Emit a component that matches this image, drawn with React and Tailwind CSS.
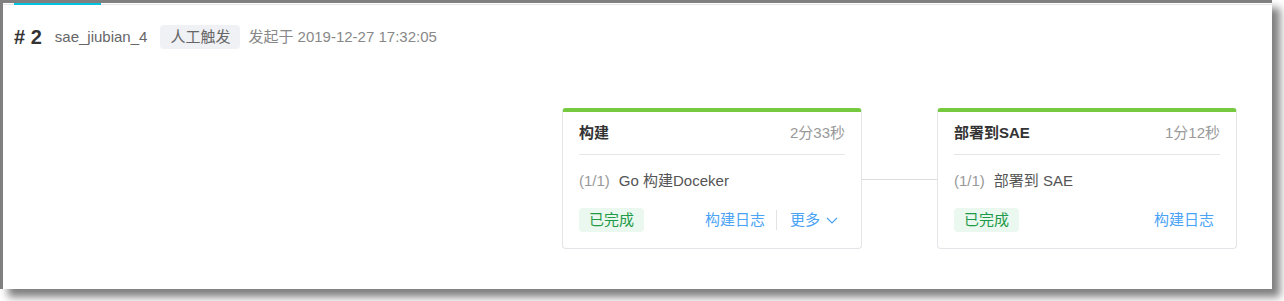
import React from "react";

const font = { fontFamily: '"Liberation Sans", "Noto Sans CJK SC", Arial, sans-serif' };

function Chevron() {
  return (
    <svg width="14" height="14" viewBox="0 0 14 14" className="ml-[5px]" fill="none">
      <path d="M2 5 L7 10 L12 5" stroke="#4aa3f5" strokeWidth="1.2" />
    </svg>
  );
}

function Card({ title, duration, task, more }) {
  return (
    <div className="w-[300px] bg-white border border-[#e3e5e8] border-t-[4px] border-t-[#77c940] rounded-[4px] px-[16px]">
      <div className="h-[43px] flex items-center justify-between border-b border-[#e6e6e6]">
        <span className="text-[15px] font-bold text-[#333]">{title}</span>
        <span className="text-[15px] text-[#999]">{duration}</span>
      </div>
      <div className="pt-[15px] pb-[16px]">
        <div className="h-[22px] leading-[22px] text-[15px] flex">
          <span className="text-[#999]">(1/1)</span>
          <span className="text-[#555] ml-[9px]">{task}</span>
        </div>
        <div className="mt-[16px] h-[24px] flex items-center justify-between">
          <span className="h-[24px] leading-[24px] px-[10px] rounded-[4px] bg-[#eaf8ef] text-[#1f9a48] text-[15px]">已完成</span>
          <div className="flex items-center pr-[6px] text-[15px] text-[#4aa3f5]">
            <span>构建日志</span>
            {more && (
              <>
                <span className="w-px h-[20px] bg-[#e3e3e3] ml-[11px] mr-[13px]"></span>
                <span>更多</span>
                <Chevron />
              </>
            )}
          </div>
        </div>
      </div>
    </div>
  );
}

export default function App() {
  return (
    <div className="w-[1284px] h-[301px] bg-white overflow-hidden" style={font}>
      <div className="w-[1272px] h-[289px] bg-white border-l-[3px] border-t-[3px] border-[#808080] shadow-[8px_8px_8px_rgba(0,0,0,0.5)] flex flex-col">
        <div className="h-[2px] flex items-end">
          <div className="w-[11px] h-px bg-[#e5e5e5]"></div>
          <div className="w-[87px] h-[2px] bg-[#00c1de]"></div>
          <div className="flex-1 h-px bg-[#e5e5e5]"></div>
        </div>
        <div className="mt-[20px] h-[24px] flex items-center pl-[11px]">
          <span className="text-[20px] font-bold text-[#333]"># 2</span>
          <span className="ml-[13px] text-[15px] text-[#666]">sae_jiubian_4</span>
          <span className="ml-[13px] h-[24px] leading-[24px] px-[10px] rounded-[4px] bg-[#f0f1f5] text-[15px] text-[#666]">人工触发</span>
          <span className="ml-[8px] text-[15px] text-[#888]">发起于 2019-12-27 17:32:05</span>
        </div>
        <div className="mt-[59px] flex justify-end pr-[35px]">
          <Card title="构建" duration="2分33秒" task="Go 构建Doceker" more />
          <div className="w-[75px] h-px bg-[#dddddd] mt-[71px]"></div>
          <Card title="部署到SAE" duration="1分12秒" task="部署到 SAE" />
        </div>
      </div>
    </div>
  );
}
